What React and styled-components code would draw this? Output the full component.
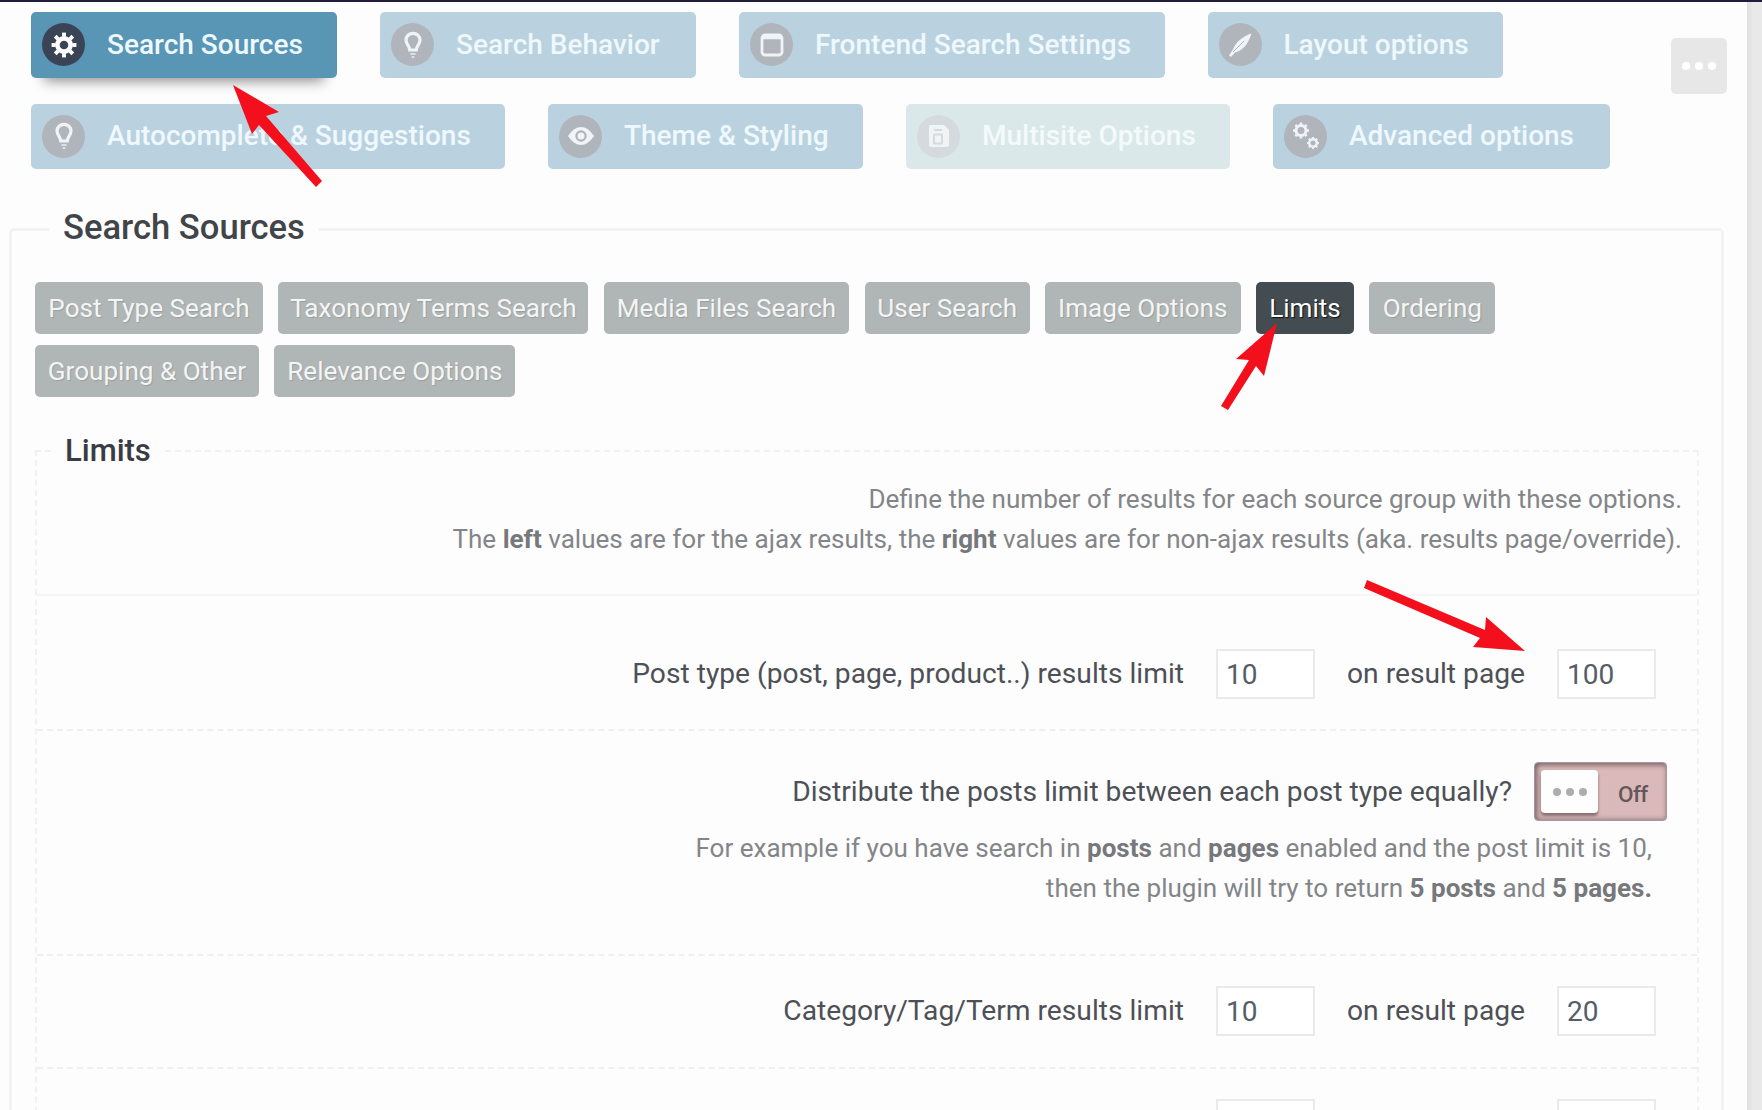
import React from 'react';
import styled, { createGlobalStyle } from 'styled-components';

const Global = createGlobalStyle`
  * { box-sizing: border-box; }
  body { margin: 0; background: #fdfdfd; font-family: Roboto, sans-serif; overflow: hidden; }
`;

const Page = styled.div`
  position: relative;
  display: flex;
  width: 1762px;
  height: 1110px;
  overflow: hidden;
  border-top: 2px solid #1f1c3c;
`;

const Main = styled.main`
  flex: 1;
  min-width: 0;
  padding: 10px 23px 0 9px;
`;

const Gutter = styled.aside`
  width: 15px;
  background: linear-gradient(90deg, #dfdfe0, #e9e9ea 6px);
`;

const Header = styled.header`
  display: flex;
  justify-content: space-between;
  height: 185px;
`;

const Tabs = styled.nav`
  display: flex;
  flex-direction: column;
  gap: 26px;
  padding-left: 22px;
`;

const TabRow = styled.div`
  display: flex;
  gap: 43px;
`;

const Tab = styled.button`
  display: flex;
  align-items: center;
  width: ${(p) => p.$w}px;
  height: 65.5px;
  padding: 0 0 0 11px;
  border: 0;
  border-radius: 5px;
  background: ${(p) => (p.$active ? '#5995b5' : p.$disabled ? '#dbe8e9' : '#bad2df')};
  box-shadow: ${(p) => (p.$active ? '0 16px 13px -13px rgba(0,0,0,.45)' : 'none')};
  color: ${(p) => (p.$active ? '#eef9ff' : p.$disabled ? '#f3fafb' : '#eef8fd')};
  font: 500 28px/1 Roboto, sans-serif;
  white-space: nowrap;
`;

const IconDisc = styled.span`
  display: flex;
  align-items: center;
  justify-content: center;
  width: 43px;
  height: 43px;
  margin-right: 22px;
  border-radius: 50%;
  background: ${(p) => (p.$active ? '#3b4457' : p.$disabled ? '#d4dadd' : '#b0b4bb')};
  color: ${(p) => (p.$active ? '#fff' : '#f1f4f6')};
`;

const MoreButton = styled.button`
  display: flex;
  align-items: center;
  justify-content: center;
  gap: 5.500px;
  width: 56px;
  height: 56px;
  margin: 26px -3px 0 0;
  padding: 0;
  border: 0;
  border-radius: 5px;
  background: #e7e7e7;
`;

const Dot = styled.i`
  width: ${(p) => p.$size}px;
  height: ${(p) => p.$size}px;
  border-radius: 50%;
  background: ${(p) => p.$color};
`;

const Panel = styled.fieldset`
  margin: 0;
  min-width: 0;
  height: 1000px;
  padding: 0 22px 0 23px;
  border: 3px solid #f3f3f3;
  border-radius: 5px;
`;

const PanelTitle = styled.legend`
  height: 64px;
  margin-left: 14px;
  padding: 0 14px;
  font-size: 34.600px;
  font-weight: 500;
  line-height: 60px;
  color: #414549;
`;

const Chips = styled.div`
  display: flex;
  flex-direction: column;
  gap: 11px;
  padding-top: 21px;
`;

const ChipRow = styled.div`
  display: flex;
  gap: 15.4px;
`;

const Chip = styled.button`
  width: ${(p) => p.$w}px;
  height: 52px;
  padding: 0;
  border: 0;
  border-radius: 5px;
  background: ${(p) => (p.$active ? '#434c50' : '#b0b5b5')};
  color: ${(p) => (p.$active ? '#fff' : '#f3f5f5')};
  font: 400 26.100px/1 Roboto, sans-serif;
  text-shadow: 1px 1px 1px rgba(0, 0, 0, ${(p) => (p.$active ? 0.8 : 0.12)});
  white-space: nowrap;
`;

const Group = styled.fieldset`
  min-width: 0;
  margin: 24px 0 0;
  padding: 0;
  border: 2px dashed #f1f1f1;
  border-bottom: 0;
`;

const GroupTitle = styled.legend`
  height: 60px;
  margin-left: 14px;
  padding: 0 14px;
  font-size: 31px;
  font-weight: 500;
  line-height: 60px;
  color: #3a3c45;
`;

const Row = styled.div`
  display: flex;
  flex-direction: column;
  align-items: flex-end;
  height: ${(p) => p.$h}px;
  padding: ${(p) => p.$pad};
  border-bottom: 2px ${(p) => (p.$solid ? 'solid #f5f5f5' : 'dashed #efefef')};
`;

const Note = styled.p`
  margin: ${(p) => p.$margin};
  text-align: right;
  font-size: 26.050px;
  line-height: 39.6px;
  color: #838588;
  white-space: nowrap;

  b { font-weight: 700; color: #76787b; }
`;

const Fields = styled.div`
  display: flex;
  align-items: center;
`;

const Label = styled.label`
  font-size: 28.200px;
  line-height: 50px;
  color: #4d5056;
  white-space: nowrap;
  margin-right: ${(p) => p.$gap}px;
`;

const NumberInput = styled.input`
  width: 99px;
  height: 50px;
  margin: 0 ${(p) => p.$gap || 0}px 0 0;
  padding: 0 8px;
  border: 2px solid #eaeaea;
  border-radius: 0;
  background: #fff;
  color: #565d66;
  font: 400 28px/1 Roboto, sans-serif;
`;

const Switch = styled.div`
  display: flex;
  align-items: center;
  width: 133px;
  height: 59px;
  padding-left: 6px;
  border: 1px solid #a89799;
  border-radius: 4px;
  background: #dab9ba;
  box-shadow: inset 0 3px 4px rgba(80, 65, 70, .5), inset 3px -1px 4px rgba(80, 65, 70, .45);
`;

const Knob = styled.span`
  display: flex;
  align-items: center;
  justify-content: center;
  gap: 5px;
  width: 57px;
  height: 43px;
  border-radius: 4px;
  background: #fefefe;
  box-shadow: 0 3px 3px rgba(70, 50, 55, .55);
`;

const SwitchText = styled.span`
  padding: 4px 0 0 20px;
  font-size: 22.500px;
  font-weight: 500;
  letter-spacing: -0.600px;
  color: #65565a;
`;

const Arrows = styled.svg`
  position: absolute;
  left: 0;
  top: -2px;
  pointer-events: none;
`;

const Glyph = ({ children, size = 28 }) => (
  <svg width={size} height={size} viewBox="0 0 28 28" fill="none" stroke="currentColor" strokeWidth="3">
    {children}
  </svg>
);

const Cog = ({ x, y, r, w, t }) => (
  <g transform={`translate(${x} ${y})`}>
    <circle r={r} strokeWidth={w} />
    {[0, 45, 90, 135, 180, 225, 270, 315].map((a) => (
      <path key={a} d={`M0 ${-r - w / 2 + 0.5}v${-t}`} strokeWidth={w * 0.85} transform={`rotate(${a})`} />
    ))}
  </g>
);

const icons = {
  gear: <Glyph><Cog x={14} y={14} r={6.6} w={4.6} t={4} /></Glyph>,
  bulb: (
    <Glyph>
      <path d="M10.800 19C10.800 15 7 13.500 7 9a7 6.700 0 0 1 14 0c0 4.500-3.800 6-3.800 10z" strokeWidth="3.200" />
      <path d="M11.500 23h5M12.700 26h2.600" strokeWidth="1.800" opacity=".7" />
    </Glyph>
  ),
  window: (
    <Glyph>
      <rect x="4" y="4" width="20" height="20" rx="3" strokeWidth="2.800" />
      <path d="M4 6h20" strokeWidth="4.500" />
    </Glyph>
  ),
  feather: (
    <Glyph>
      <path d="M25.500 2.500C17 5 10 11 7.500 17.500L3 24.500l2 1.500 4-4.500C16 20 22 14 25.500 2.500z" fill="currentColor" stroke="none" />
      <path d="M7 21L18 10" stroke="#b0b4bb" strokeWidth="1" />
    </Glyph>
  ),
  eye: (
    <Glyph>
      <path d="M1 14Q7 5 14 5t13 9q-6 9-13 9T1 14z" fill="currentColor" stroke="none" />
      <circle cx="14" cy="14" r="4.600" stroke="#b0b4bb" strokeWidth="2.200" />
    </Glyph>
  ),
  save: (
    <Glyph>
      <path d="M5 3h14l5 5v14a3 3 0 0 1-3 3H6a2 2 0 0 1-2-2V4z" fill="currentColor" stroke="none" />
      <path d="M9 8h8M9 12.500h8v9H9z" stroke="#d4dadd" strokeWidth="2" />
    </Glyph>
  ),
  cogs: (
    <Glyph>
      <Cog x={9} y={8.5} r={5} w={3} t={2} />
      <Cog x={21} y={21} r={3.8} w={2.4} t={1.4} />
    </Glyph>
  ),
};

const tabRows = [
  [
    { label: 'Search Sources', icon: 'gear', w: 306, active: true },
    { label: 'Search Behavior', icon: 'bulb', w: 316 },
    { label: 'Frontend Search Settings', icon: 'window', w: 425.5 },
    { label: 'Layout options', icon: 'feather', w: 295 },
  ],
  [
    { label: 'Autocomplete & Suggestions', icon: 'bulb', w: 474 },
    { label: 'Theme & Styling', icon: 'eye', w: 315 },
    { label: 'Multisite Options', icon: 'save', w: 324, disabled: true },
    { label: 'Advanced options', icon: 'cogs', w: 337 },
  ],
];

const chipRows = [
  [
    ['Post Type Search', 228],
    ['Taxonomy Terms Search', 310],
    ['Media Files Search', 245.5],
    ['User Search', 165],
    ['Image Options', 195.5],
    ['Limits', 98],
    ['Ordering', 126],
  ],
  [
    ['Grouping & Other', 224],
    ['Relevance Options', 241],
  ],
];

const LimitFields = ({ label, ajax, page }) => (
  <Fields>
    {label && <Label $gap={32}>{label}</Label>}
    <NumberInput $gap={label ? 32 : 242} defaultValue={ajax} />
    {label && <Label $gap={32}>on result page</Label>}
    <NumberInput defaultValue={page} />
  </Fields>
);

const Dots = ({ size, color }) => [0, 1, 2].map((n) => <Dot key={n} $size={size} $color={color} />);

export default function App() {
  return (
    <Page>
      <Global />
      <Main>
        <Header>
          <Tabs>
            {tabRows.map((row, i) => (
              <TabRow key={i}>
                {row.map((t) => (
                  <Tab key={t.label} $w={t.w} $active={t.active} $disabled={t.disabled}>
                    <IconDisc $active={t.active} $disabled={t.disabled}>{icons[t.icon]}</IconDisc>
                    {t.label}
                  </Tab>
                ))}
              </TabRow>
            ))}
          </Tabs>
          <MoreButton><Dots size={7.5} color="#fff" /></MoreButton>
        </Header>
        <Panel>
          <PanelTitle>Search Sources</PanelTitle>
          <Chips>
            {chipRows.map((row, i) => (
              <ChipRow key={i}>
                {row.map(([label, w]) => (
                  <Chip key={label} $w={w} $active={label === 'Limits'}>{label}</Chip>
                ))}
              </ChipRow>
            ))}
          </Chips>
          <Group>
            <GroupTitle>Limits</GroupTitle>
            <Row $h={115} $pad="0 15px 0 0" $solid>
              <Note $margin="-1px 0 0">
                Define the number of results for each source group with these options.<br />
                The <b>left</b> values are for the ajax results, the <b>right</b> values are for non-ajax results (aka. results page/override).
              </Note>
            </Row>
            <Row $h={135} $pad="53px 41px 0 0">
              <LimitFields label="Post type (post, page, product..) results limit" ajax="10" page="100" />
            </Row>
            <Row $h={225} $pad="31px 30px 0 0">
              <Fields>
                <Label $gap={22}>Distribute the posts limit between each post type equally?</Label>
                <Switch>
                  <Knob><Dots size={8} color="#adadb0" /></Knob>
                  <SwitchText>Off</SwitchText>
                </Switch>
              </Fields>
              <Note $margin="8px 15px 0 0">
                For example if you have search in <b>posts</b> and <b>pages</b> enabled and the post limit is 10,<br />
                then the plugin will try to return <b>5 posts</b> and <b>5 pages.</b>
              </Note>
            </Row>
            <Row $h={113} $pad="30px 41px 0 0">
              <LimitFields label="Category/Tag/Term results limit" ajax="10" page="20" />
            </Row>
            <Row $h={113} $pad="30px 41px 0 0">
              <LimitFields />
            </Row>
          </Group>
        </Panel>
      </Main>
      <Gutter />
      <Arrows width="1762" height="1110" fill="#f3101c">
        <path d="M233 85L279 112L266 116L322 181L316 187L259 125L252 134Z" />
        <path d="M1277 323L1264 376L1256 366L1228 410L1221 406L1249 360L1236 359Z" />
        <path d="M1525 651L1473 647L1480 638L1364 588L1367 580L1485 630L1486 617Z" />
      </Arrows>
    </Page>
  );
}
